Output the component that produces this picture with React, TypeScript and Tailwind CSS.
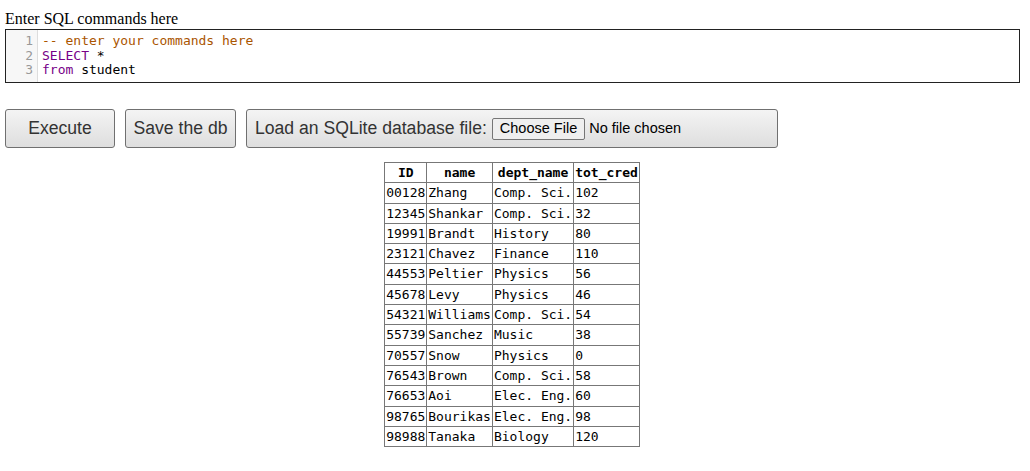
const rows: [string, string, string, string][] = [
    ["00128", "Zhang", "Comp. Sci.", "102"],
    ["12345", "Shankar", "Comp. Sci.", "32"],
    ["19991", "Brandt", "History", "80"],
    ["23121", "Chavez", "Finance", "110"],
    ["44553", "Peltier", "Physics", "56"],
    ["45678", "Levy", "Physics", "46"],
    ["54321", "Williams", "Comp. Sci.", "54"],
    ["55739", "Sanchez", "Music", "38"],
    ["70557", "Snow", "Physics", "0"],
    ["76543", "Brown", "Comp. Sci.", "58"],
    ["76653", "Aoi", "Elec. Eng.", "60"],
    ["98765", "Bourikas", "Elec. Eng.", "98"],
    ["98988", "Tanaka", "Biology", "120"],
];

const btn =
    "h-[39px] rounded-[3px] border border-[#707070] bg-gradient-to-b from-[#f4f4f4] to-[#dedede] text-[17.6px] text-[#333] font-['Liberation_Sans',Arial,sans-serif]";

function Editor() {
    const lines = [
        <span className="text-[#aa5500]">-- enter your commands here</span>,
        <span>
            <span className="text-[#770088]">SELECT</span> *
        </span>,
        <span>
            <span className="text-[#770088]">from</span> student
        </span>,
    ];
    return (
        <div className="ml-[5px] mr-[10px] flex border border-[#222] bg-white font-['DejaVu_Sans_Mono',monospace] text-[13px] leading-[14.5px] h-[54px]">
            <div className="w-[32px] shrink-0 bg-[#f7f7f7] border-r border-[#ddd] pt-[4px] pr-[4px] text-right text-[#999]">
                {lines.map((_, i) => (
                    <div key={i}>{i + 1}</div>
                ))}
            </div>
            <div className="pt-[4px] pl-[4px] text-black whitespace-pre">
                {lines.map((l, i) => (
                    <div key={i}>{l}</div>
                ))}
            </div>
        </div>
    );
}

export default function App() {
    return (
        <div className="min-h-[471px] bg-white">
            <div className="pt-[9px] pl-[5px] text-[16px] leading-[19px] text-black font-['Liberation_Serif',serif]">
                Enter SQL commands here
            </div>
            <div className="mt-[1px]">
                <Editor />
            </div>

            <div className="mt-[26px] flex items-center gap-[10px] pl-[5px]">
                <button className={`${btn} w-[110px]`}>Execute</button>
                <button className={`${btn} w-[111px]`}>Save the db</button>
                <div className={`${btn} w-[532px] flex items-center pl-[8px]`}>
                    <span>Load an SQLite database file:</span>
                    <span className="ml-[5px] h-[22px] px-[7px] flex items-center rounded-[2px] border border-[#767676] bg-[#efefef] text-[14.5px] text-black">
                        Choose File
                    </span>
                    <span className="ml-[4px] text-[14.5px] text-black">No file chosen</span>
                </div>
            </div>

            <div className="mt-[14px] flex justify-center pr-[6px]">
                <table className="border-collapse border border-[#777] font-['DejaVu_Sans_Mono',monospace] text-[13px] leading-[19.3px] text-black">
                    <thead>
                        <tr>
                            {["ID", "name", "dept_name", "tot_cred"].map((h) => (
                                <th key={h} className="border border-[#777] px-[1px] font-bold text-center">
                                    {h}
                                </th>
                            ))}
                        </tr>
                    </thead>
                    <tbody>
                        {rows.map((r) => (
                            <tr key={r[0]}>
                                {r.map((c, i) => (
                                    <td key={i} className="border border-[#777] px-[1px] whitespace-pre">
                                        {c}
                                    </td>
                                ))}
                            </tr>
                        ))}
                    </tbody>
                </table>
            </div>
        </div>
    );
}
